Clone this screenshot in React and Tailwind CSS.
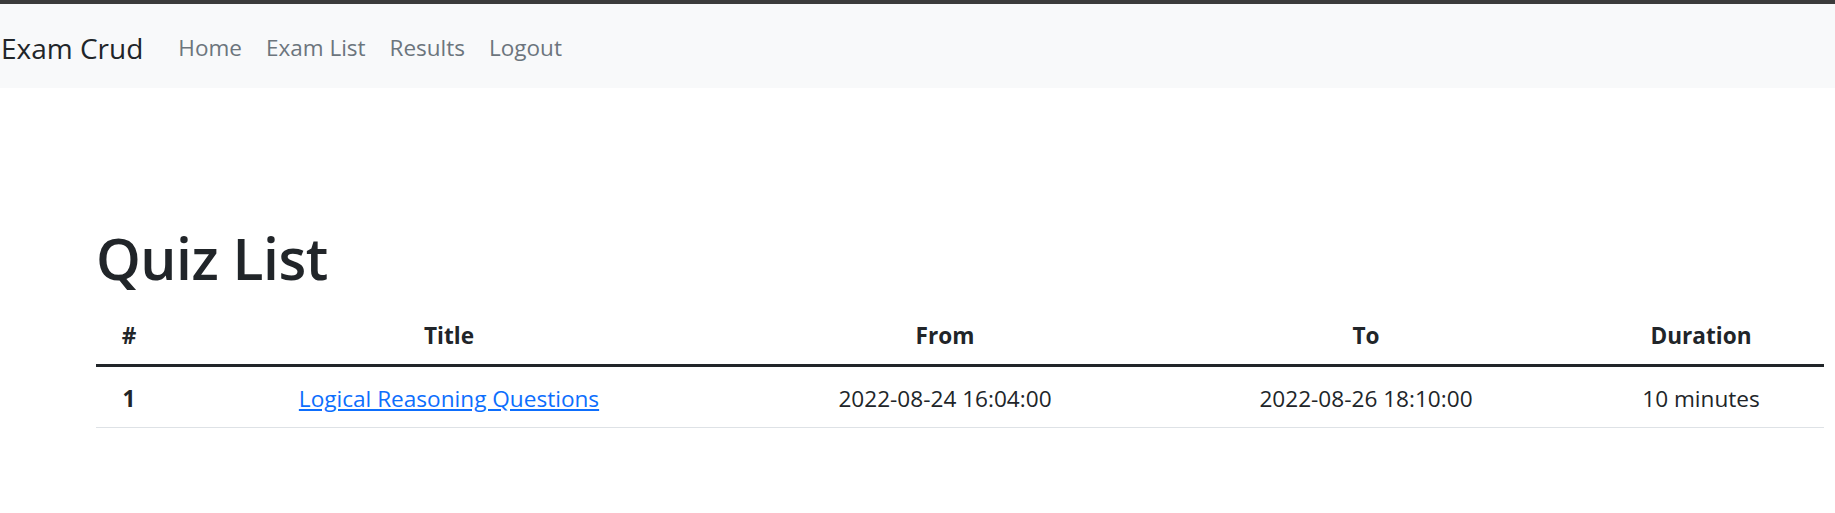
import React from 'react';

const quizzes = [
  {
    id: 1,
    title: 'Logical Reasoning Questions',
    from: '2022-08-24 16:04:00',
    to: '2022-08-26 18:10:00',
    duration: '10 minutes',
  },
];

export default function App() {
  return (
    <div className="min-h-screen bg-white text-[#212529]" style={{ fontFamily: '"Open Sans", "Noto Sans", sans-serif' }}>
      {/* Browser top edge */}
      <div className="h-[4px] bg-[#3b3b3b]" />

      {/* Navbar */}
      <nav className="h-[84px] bg-[#f8f9fa] flex items-center">
        <a href="#" className="text-[28px] leading-[40px] text-[#212529] mr-[35px] ml-[1px] mt-[4px]">
          Exam Crud
        </a>
        <div className="flex items-center gap-[24px] text-[22.5px] leading-[34px] text-[#6c757d] mt-[4px]">
          <a href="#">Home</a>
          <a href="#">Exam List</a>
          <a href="#">Results</a>
          <a href="#">Logout</a>
        </div>
      </nav>

      {/* Content */}
      <div className="pl-[96px] pr-[11px]">
        <h1 className="mt-[137px] mb-[16px] text-[57px] leading-[67px] font-semibold tracking-[-0.5px]">Quiz List</h1>

        <table className="w-full table-fixed border-collapse text-[22.6px]">
          <thead>
            <tr className="border-b-[3px] border-[#212529]">
              <th className="w-[66px] py-[11px] leading-[34px] font-bold text-center">#</th>
              <th className="w-[574px] py-[11px] leading-[34px] font-bold text-center">Title</th>
              <th className="w-[418px] py-[11px] leading-[34px] font-bold text-center">From</th>
              <th className="w-[424px] py-[11px] leading-[34px] font-bold text-center">To</th>
              <th className="py-[11px] leading-[34px] font-bold text-center">Duration</th>
            </tr>
          </thead>
          <tbody>
            {quizzes.map(quiz => (
              <tr key={quiz.id} className="border-b border-[#dee2e6]">
                <td className="pt-[15px] pb-[11px] leading-[34px] text-center font-bold">{quiz.id}</td>
                <td className="pt-[15px] pb-[11px] leading-[34px] text-center">
                  <a href="#" className="text-[#0d6efd] underline">{quiz.title}</a>
                </td>
                <td className="pt-[15px] pb-[11px] leading-[34px] text-center">{quiz.from}</td>
                <td className="pt-[15px] pb-[11px] leading-[34px] text-center">{quiz.to}</td>
                <td className="pt-[15px] pb-[11px] leading-[34px] text-center">{quiz.duration}</td>
              </tr>
            ))}
          </tbody>
        </table>
      </div>
    </div>
  );
}
